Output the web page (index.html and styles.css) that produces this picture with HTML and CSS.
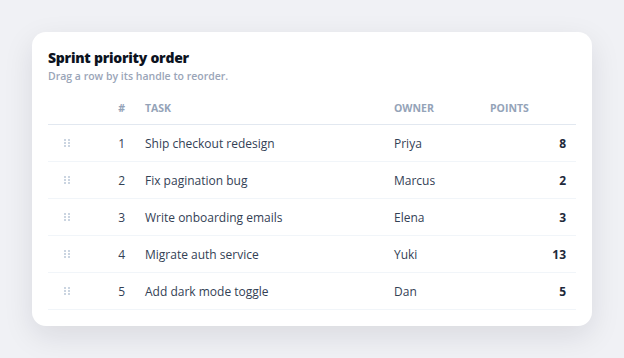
FILE: index.html
```html
<!DOCTYPE html>
<html>
<head>
<meta charset="utf-8">
<link rel="stylesheet" href="styles.css">
</head>
<body>
<div class="card">
  <h1 class="title">Sprint priority order</h1>
  <p class="sub">Drag a row by its handle to reorder.</p>
  <table class="tbl">
    <thead>
      <tr><th class="c-h"></th><th class="c-n">#</th><th class="c-t">Task</th><th class="c-o">Owner</th><th class="c-p">Points</th></tr>
    </thead>
    <tbody>
      <tr><td class="c-h"><span class="grip"><i></i><i></i><i></i><i></i><i></i><i></i></span></td><td class="c-n">1</td><td class="c-t">Ship checkout redesign</td><td class="c-o">Priya</td><td class="c-p">8</td></tr>
      <tr><td class="c-h"><span class="grip"><i></i><i></i><i></i><i></i><i></i><i></i></span></td><td class="c-n">2</td><td class="c-t">Fix pagination bug</td><td class="c-o">Marcus</td><td class="c-p">2</td></tr>
      <tr><td class="c-h"><span class="grip"><i></i><i></i><i></i><i></i><i></i><i></i></span></td><td class="c-n">3</td><td class="c-t">Write onboarding emails</td><td class="c-o">Elena</td><td class="c-p">3</td></tr>
      <tr><td class="c-h"><span class="grip"><i></i><i></i><i></i><i></i><i></i><i></i></span></td><td class="c-n">4</td><td class="c-t">Migrate auth service</td><td class="c-o">Yuki</td><td class="c-p">13</td></tr>
      <tr><td class="c-h"><span class="grip"><i></i><i></i><i></i><i></i><i></i><i></i></span></td><td class="c-n">5</td><td class="c-t">Add dark mode toggle</td><td class="c-o">Dan</td><td class="c-p">5</td></tr>
    </tbody>
  </table>
</div>
</body>
</html>
```

FILE: styles.css
```css
html, body { margin: 0; padding: 0; }
body {
  background: #f0f1f5;
  font-family: "Open Sans", "Noto Sans", sans-serif;
  color: #334155;
  padding: 32px;
}
.card {
  width: 528px;
  background: #fff;
  border-radius: 14px;
  padding: 16px 16px 16px;
  box-shadow: 0 10px 30px rgba(15, 23, 42, 0.1);
}
.title {
  margin: 0;
  font-size: 14px;
  font-weight: 800;
  letter-spacing: -0.25px;
  color: #0b1220;
  line-height: 20px;
}
.sub {
  margin: 0 0 8px;
  font-size: 10.5px;
  font-weight: 600;
  line-height: 16px;
  color: #9aa5b8;
}
.tbl {
  width: 100%;
  border-collapse: collapse;
  table-layout: fixed;
}
.tbl th {
  font-size: 10.5px;
  font-weight: 700;
  text-transform: uppercase;
  color: #94a3b8;
  text-align: left;
  height: 32px;
  padding: 0 10px;
  border-bottom: 1px solid #e2e8f0;
}
.tbl td {
  font-size: 12px;
  height: 36px;
  padding: 0 10px;
  border-bottom: 1px solid #f1f5f9;
  color: #334155;
}
.c-h { width: 18px; }
.c-n { width: 29px; }
.tbl th.c-n, .tbl td.c-n { text-align: right; }
.c-t { width: auto; }
.c-o { width: 76px; }
.c-p { width: 76px; }
.tbl td.c-p { text-align: right; font-weight: 700; color: #1e293b; }
.grip {
  display: grid;
  grid-template-columns: 2px 2px;
  gap: 1px 2px;
  width: 6px;
  margin-left: 6px;
}
.grip i {
  display: block;
  width: 2px;
  height: 2px;
  background: #cbd5e1;
}
```
